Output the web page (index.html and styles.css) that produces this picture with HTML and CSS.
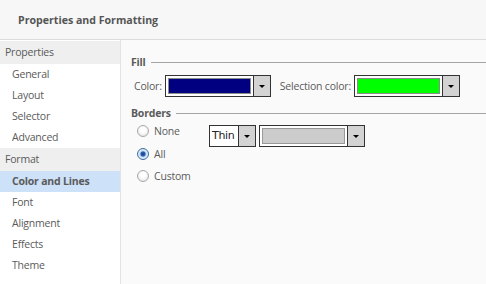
FILE: index.html
```html
<!DOCTYPE html>
<html lang="en">
<head>
    <meta charset="UTF-8">
    <title>Properties and Formatting</title>
    <link rel="stylesheet" href="styles.css">
</head>
<body>
    <div class="header">Properties and Formatting</div>

    <div class="main">
        <!-- left navigation -->
        <div class="sidebar">
            <div class="group">Properties</div>
            <div class="item">General</div>
            <div class="item">Layout</div>
            <div class="item">Selector</div>
            <div class="item">Advanced</div>
            <div class="group">Format</div>
            <div class="item selected">Color and Lines</div>
            <div class="item">Font</div>
            <div class="item">Alignment</div>
            <div class="item">Effects</div>
            <div class="item">Theme</div>
        </div>

        <!-- settings panel -->
        <div class="content">
            <div class="section-title">Fill</div>
            <div class="fill-row">
                <span class="label">Color:</span>
                <div class="picker">
                    <div class="swatch navy"></div>
                    <div class="drop"><span class="arrow"></span></div>
                </div>
                <span class="label sel-label">Selection color:</span>
                <div class="picker">
                    <div class="swatch green"></div>
                    <div class="drop"><span class="arrow"></span></div>
                </div>
            </div>

            <div class="section-title">Borders</div>
            <div class="borders-row">
                <div class="radios">
                    <div class="radio-line"><span class="radio"></span>None</div>
                    <div class="radio-line"><span class="radio checked"></span>All</div>
                    <div class="radio-line"><span class="radio"></span>Custom</div>
                </div>
                <div class="picker thin">
                    <div class="thin-text">Thin</div>
                    <div class="drop"><span class="arrow"></span></div>
                </div>
                <div class="picker">
                    <div class="swatch grey"></div>
                    <div class="drop"><span class="arrow"></span></div>
                </div>
            </div>
        </div>
    </div>
</body>
</html>
```

FILE: styles.css
```css
body {
    margin: 0;
    padding: 0;
    width: 486px;
    height: 284px;
    overflow: hidden;
    font-family: 'Open Sans', 'DejaVu Sans', sans-serif;
    font-size: 10.5px;
    letter-spacing: -0.2px;
    color: #5a5a5a;
    background-color: #fafafa;
}

.header {
    height: 40px;
    box-sizing: border-box;
    padding-left: 18px;
    line-height: 40px;
    font-weight: bold;
    font-size: 10.6px;
    letter-spacing: 0;
    color: #555;
    background-color: #f7f7f7;
    border-bottom: 1px solid #dcdcdc;
}

.main {
    display: flex;
    height: 244px;
}

.sidebar {
    width: 120px;
    flex-shrink: 0;
    padding-top: 1px;
    background-color: #fff;
    border-right: 1px solid #e2e2e2;
}

.group {
    height: 23px;
    line-height: 23px;
    padding-left: 5px;
    background-color: #efefef;
}

.item {
    height: 21px;
    line-height: 21px;
    padding-left: 12px;
}

.item.selected {
    background-color: #cde1f8;
    font-weight: bold;
}

.content {
    flex: 1;
    padding: 14px 0 0 10px;
}

.section-title {
    display: flex;
    align-items: center;
    gap: 5px;
    height: 16px;
    font-weight: bold;
}

.section-title::after {
    content: "";
    flex: 1;
    border-top: 1px solid #a5a5a5;
}

.fill-row {
    display: flex;
    align-items: center;
    padding-left: 3px;
    margin: 5px 0 8px;
}

.label {
    margin-right: 3px;
}

.sel-label {
    margin-left: 9px;
}

.picker {
    display: flex;
    width: 106px;
    height: 22px;
    box-sizing: border-box;
    border: 1px solid #333;
    background-color: #fff;
}

.swatch {
    flex: 1;
    margin: 2px;
    border: 1px solid #8a8a8a;
}

.navy {
    background-color: #000080;
}

.green {
    background-color: #00ff00;
}

.grey {
    background-color: #cccccc;
    border-color: #999;
}

.drop {
    width: 16px;
    border-left: 1px solid #333;
    background-color: #d3d3d3;
    display: flex;
    align-items: center;
    justify-content: center;
}

.arrow {
    width: 0;
    height: 0;
    border-left: 3px solid transparent;
    border-right: 3px solid transparent;
    border-top: 3px solid #000;
}

.borders-row {
    display: flex;
    align-items: flex-start;
    margin-top: 4px;
}

.radios {
    width: 72px;
    padding-left: 6px;
    margin-top: -5px;
}

.radio-line {
    display: flex;
    align-items: center;
    height: 22.5px;
}

.radio {
    width: 10px;
    height: 10px;
    border-radius: 50%;
    border: 1px solid #a9a9a9;
    background: radial-gradient(circle at 50% 40%, #fff 30%, #dcdcdc 100%);
    margin-right: 5px;
}

.radio.checked {
    border-color: #3a6ea5;
    background: radial-gradient(circle, #1b3f78 0, #2a63b8 30%, #cfe0f5 45%, #f4f8fd 100%);
}

.picker.thin {
    width: 47px;
    margin-right: 3px;
}

.thin-text {
    flex: 1;
    padding-left: 2px;
    line-height: 20px;
    font-family: 'DejaVu Sans', sans-serif;
    font-size: 11px;
    letter-spacing: -0.3px;
    color: #222;
}
```
